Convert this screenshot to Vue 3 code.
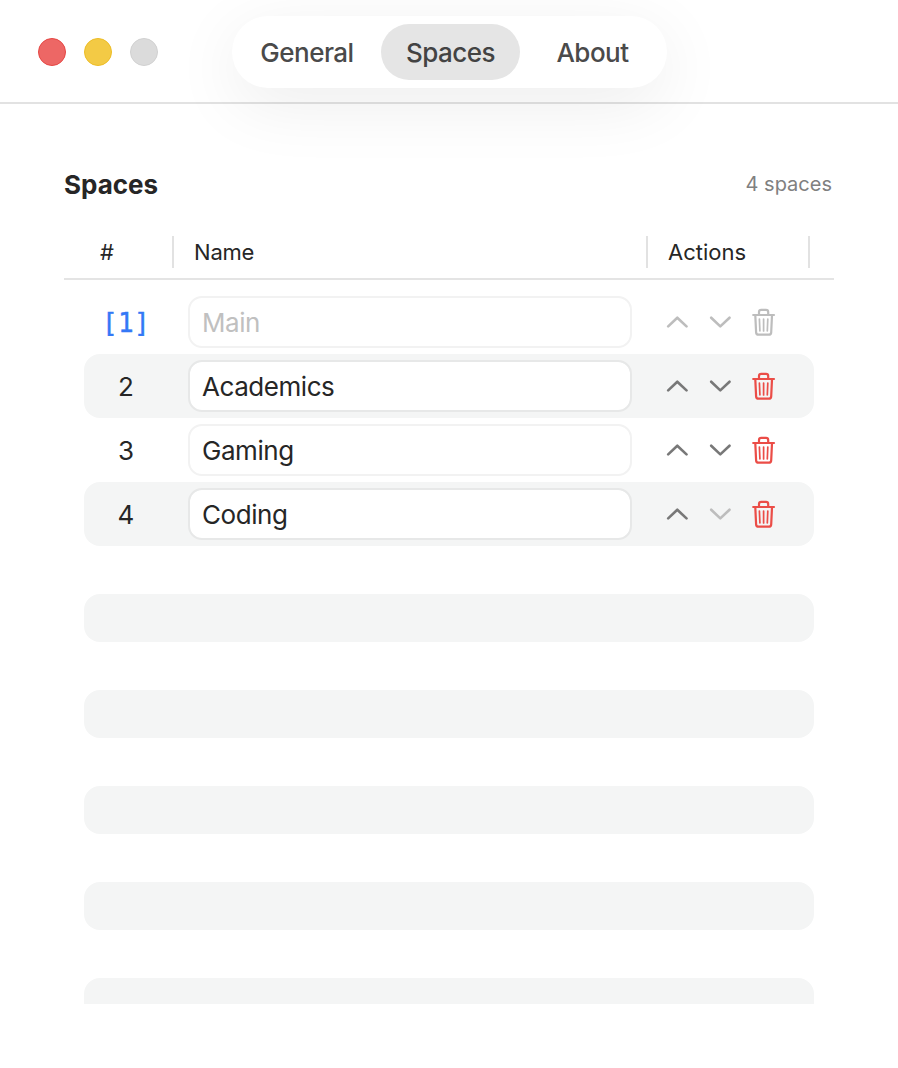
<script setup>
import { ref } from 'vue'

const tabs = ['General', 'Spaces', 'About']
const active = ref('Spaces')
const spaces = ref([
  { id: 1, name: 'Main', current: true, up: false, down: false, removable: false },
  { id: 2, name: 'Academics', up: true, down: true, removable: true },
  { id: 3, name: 'Gaming', up: true, down: true, removable: true },
  { id: 4, name: 'Coding', up: true, down: false, removable: true },
])
</script>

<template>
  <div class="window">
    <header class="titlebar">
      <div class="lights">
        <span class="light close"></span>
        <span class="light minimize"></span>
        <span class="light zoom"></span>
      </div>
      <nav class="tabs">
        <button
          v-for="tab in tabs"
          :key="tab"
          class="tab"
          :class="[tab.toLowerCase(), { active: tab === active }]"
          @click="active = tab"
        ><span>{{ tab }}</span></button>
      </nav>
    </header>

    <main class="content">
      <div class="heading">
        <h1>Spaces</h1>
        <span class="count">{{ spaces.length }} spaces</span>
      </div>

      <div class="columns">
        <div class="col num">#</div>
        <div class="col name"><span>Name</span></div>
        <div class="col actions"><span>Actions</span></div>
      </div>

      <div class="rows">
        <div v-for="space in spaces" :key="space.id" class="row">
          <div class="index" :class="{ current: space.current }">{{ space.current ? `[${space.id}]` : space.id }}</div>
          <div class="field" :class="{ disabled: space.current }"><span>{{ space.name }}</span></div>
          <div class="buttons">
            <svg class="chevron" :class="{ off: !space.up }" width="22" height="12" viewBox="0 0 22 12">
              <path d="M2.2 10.4 L11.3 1.7 L20.5 10.4" />
            </svg>
            <svg class="chevron" :class="{ off: !space.down }" width="22" height="12" viewBox="0 0 22 12">
              <path d="M2.2 1.7 L11.3 10.4 L20.5 1.7" />
            </svg>
            <svg class="trash" :class="{ off: !space.removable }" width="24" height="30" viewBox="0 0 24 30">
              <path d="M1.2 8 H22 M7 7.8 V5 Q7 2.8 9.2 2.8 H14 Q16.2 2.8 16.2 5 V7.8 M3.3 8.4 L4.1 25.4 Q4.2 27.7 6.5 27.7 H16.8 Q19.1 27.7 19.2 25.4 L20 8.4" />
              <path class="ribs" d="M7.4 12 L7.9 24 M11.6 12 V24 M15.8 12 L15.3 24" />
            </svg>
          </div>
        </div>
        <div v-for="n in 10" :key="`empty-${n}`" class="row empty"></div>
      </div>
    </main>
  </div>
</template>

<style>
html,
body {
  margin: 0;
  background: #fff;
}
</style>

<style scoped>
.window {
  width: 898px;
  height: 1068px;
  overflow: hidden;
  background: #fff;
  color: #262626;
  font-family: Inter, "Liberation Sans", sans-serif;
}
.titlebar {
  display: flex;
  align-items: flex-start;
  box-sizing: border-box;
  height: 104px;
  padding: 16px 0 0 38px;
  border-bottom: 2px solid #e2e2e2;
}
.lights {
  display: flex;
  gap: 18px;
  width: 194px;
  padding-top: 22px;
}
.light {
  box-sizing: border-box;
  width: 28px;
  height: 28px;
  border-radius: 50%;
}
.close { background: #ed6765; border: 1.5px solid #e64744; }
.minimize { background: #f3ca45; border: 1.5px solid #edbd26; }
.zoom { background: #dbdbdb; border: 1.5px solid #d1d1d1; }
.tabs {
  display: flex;
  box-sizing: border-box;
  width: 435px;
  height: 72px;
  padding: 8px;
  border-radius: 36px;
  background: #fff;
  box-shadow: 0 16px 68px rgba(0, 0, 0, 0.075);
}
.tab {
  height: 56px;
  padding: 2px 0 0;
  border: 0;
  border-radius: 28px;
  background: none;
  color: #4a4a4a;
  font: 450 26px/54px Inter, "Liberation Sans", sans-serif;
  letter-spacing: -0.5px;
  text-align: center;
  white-space: nowrap;
}
.tab.general { width: 141px; padding-right: 7px; }
.tab.spaces { width: 139px; }
.tab.about { width: 139px; padding-left: 6px; }
.tab.active { background: #e5e5e5; color: #434343; }
.content {
  padding: 59px 64px 0;
}
.heading {
  display: flex;
  align-items: center;
  justify-content: space-between;
  height: 42px;
  padding-right: 2px;
}
h1 {
  margin: 0;
  font-size: 26px;
  font-weight: 700;
}
.count {
  color: #808080;
  font-size: 20px;
}
.columns {
  display: flex;
  box-sizing: border-box;
  height: 75px;
  padding-top: 31px;
  border-bottom: 2px solid #e4e4e4;
  font-size: 22px;
  line-height: 32px;
}
.col {
  box-sizing: border-box;
  height: 32px;
  border-right: 2px solid #e2e2e2;
}
.num { width: 110px; padding-left: 36px; }
.name { width: 474px; padding-left: 20px; letter-spacing: -0.2px; }
.actions { width: 162px; padding-left: 20px; }
.rows {
  height: 714px;
  margin: 10px 0 0 20px;
  width: 730px;
  overflow: hidden;
}
.row {
  display: flex;
  align-items: center;
  height: 64px;
  border-radius: 16px;
}
.row:nth-child(even) { background: #f4f5f5; }
.row.empty { height: 48px; }
.index {
  width: 84px;
  margin-right: 20px;
  padding-top: 2px;
  box-sizing: border-box;
  font-size: 26px;
  line-height: 32px;
  text-align: center;
}
.index.current {
  color: #3478f6;
  font-family: "DejaVu Sans Mono", "Liberation Mono", monospace;
  font-size: 26px;
  letter-spacing: 0.3px;
  -webkit-text-stroke: 0.4px #3478f6;
}
.field {
  box-sizing: border-box;
  width: 444px;
  height: 52px;
  padding: 1px 0 0 12px;
  border: 2px solid #f2f2f2;
  border-radius: 14px;
  background: #fff;
  background-clip: padding-box;
  font-size: 26px;
  line-height: 48px;
  letter-spacing: -0.45px;
}
.row:nth-child(even) .field { border-color: #e7e8e8; }
.field.disabled { color: #c0c0c0; }
.buttons {
  display: flex;
  align-items: center;
  margin-left: 34px;
}
.chevron {
  margin-right: 21px;
  fill: none;
  stroke: #787878;
  stroke-width: 2.6;
  stroke-linecap: round;
  stroke-linejoin: round;
}
.trash {
  fill: none;
  stroke: #eb4d47;
  stroke-width: 2.2;
  stroke-linecap: round;
  stroke-linejoin: round;
}
.ribs { stroke-width: 1.7; }
.off { stroke: #bdbdbd; }
</style>
